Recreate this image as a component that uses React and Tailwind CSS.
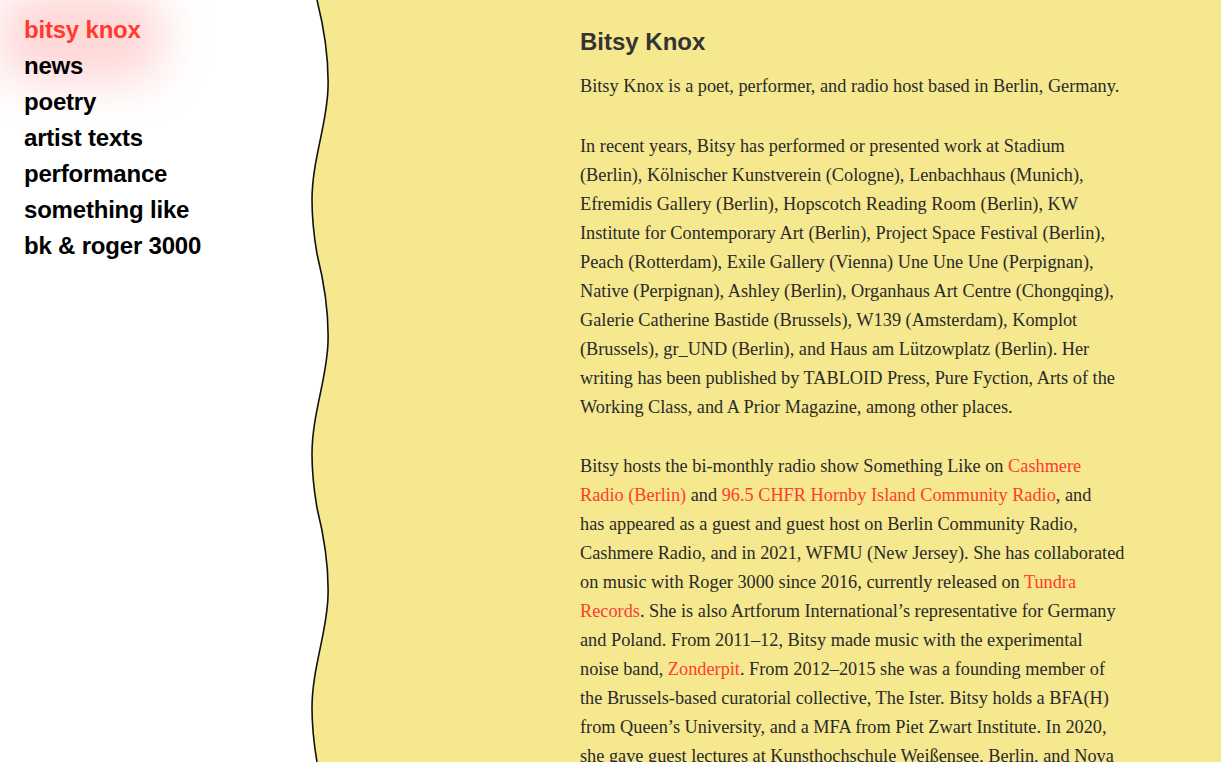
const nav = ['bitsy knox', 'news', 'poetry', 'artist texts', 'performance', 'something like', 'bk & roger 3000'];

function Link({ children }) {
  return <a href="#" className="text-[#ff3b30]">{children}</a>;
}

function Wave() {
  const seg = (o) =>
    `C 22 ${o + 20}, 29 ${o + 55}, 28 ${o + 88} C 27 ${o + 125}, 12 ${o + 160}, 12 ${o + 200} C 12 ${o + 225}, 15 ${o + 242}, 17 ${o + 254}`;
  const d = `M 17 0 ${seg(0)} ${seg(254)} ${seg(508)}`;
  return (
    <svg width="40" height="762" viewBox="0 0 40 762" className="shrink-0 block">
      <path d={`${d} L 40 762 L 40 0 Z`} fill="#f5e88e" />
      <path d={d} fill="none" stroke="#111" strokeWidth="1.6" />
    </svg>
  );
}

export default function App() {
  return (
    <div className="flex h-[762px] w-[1221px] overflow-hidden bg-white">
      <nav className="relative w-[300px] shrink-0 pt-[12px] pl-[24px]">
        <div className="absolute left-[-6px] top-[-10px] h-[92px] w-[172px] rounded-full bg-[#ff5a5a]/25 blur-xl" />
        <ul className="relative font-['Liberation_Sans',Arial,sans-serif] text-[24px] leading-[36px] font-bold tracking-[-0.2px]">
          {nav.map((n, i) => (
            <li key={n} className={i === 0 ? 'text-[#ff3b30]' : 'text-black'}>{n}</li>
          ))}
        </ul>
      </nav>
      <Wave />
      <main className="flex-1 bg-[#f5e88e] pl-[240px] pt-[28px]">
        <h1 className="font-['Liberation_Sans',Arial,sans-serif] text-[24px] font-bold leading-[28px] text-[#333]">Bitsy Knox</h1>
        <div className="mt-[16px] w-[580px] whitespace-nowrap font-['Liberation_Serif','Times_New_Roman',serif] text-[18.3px] leading-[29px] text-[#2a2a2a] space-y-[30.5px]">
          <p>Bitsy Knox is a poet, performer, and radio host based in Berlin, Germany.</p>
          <p>
            In recent years, Bitsy has performed or presented work at Stadium<br />
            (Berlin), Kölnischer Kunstverein (Cologne), Lenbachhaus (Munich),<br />
            Efremidis Gallery (Berlin), Hopscotch Reading Room (Berlin), KW<br />
            Institute for Contemporary Art (Berlin), Project Space Festival (Berlin),<br />
            Peach (Rotterdam), Exile Gallery (Vienna) Une Une Une (Perpignan),<br />
            Native (Perpignan), Ashley (Berlin), Organhaus Art Centre (Chongqing),<br />
            Galerie Catherine Bastide (Brussels), W139 (Amsterdam), Komplot<br />
            (Brussels), gr_UND (Berlin), and Haus am Lützowplatz (Berlin). Her<br />
            writing has been published by TABLOID Press, Pure Fyction, Arts of the<br />
            Working Class, and A Prior Magazine, among other places.
          </p>
          <p>
            Bitsy hosts the bi-monthly radio show Something Like on <Link>Cashmere<br />Radio (Berlin)</Link> and <Link>96.5 CHFR Hornby Island Community Radio</Link>, and<br />
            has appeared as a guest and guest host on Berlin Community Radio,<br />
            Cashmere Radio, and in 2021, WFMU (New Jersey). She has collaborated<br />
            on music with Roger 3000 since 2016, currently released on <Link>Tundra<br />Records</Link>. She is also Artforum International’s representative for Germany<br />
            and Poland. From 2011–12, Bitsy made music with the experimental<br />
            noise band, <Link>Zonderpit</Link>. From 2012–2015 she was a founding member of<br />
            the Brussels-based curatorial collective, The Ister. Bitsy holds a BFA(H)<br />
            from Queen’s University, and a MFA from Piet Zwart Institute. In 2020,<br />
            she gave guest lectures at Kunsthochschule Weißensee, Berlin, and Nova<br />
            University Lisbon.
          </p>
        </div>
      </main>
    </div>
  );
}
